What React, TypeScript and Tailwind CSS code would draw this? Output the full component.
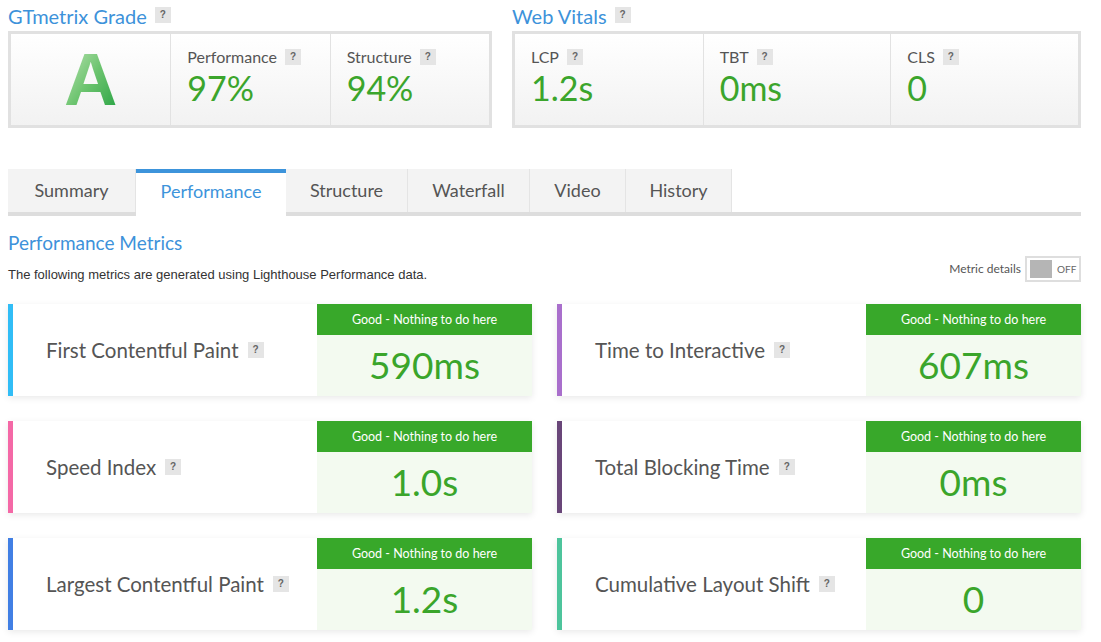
import { ReactNode } from "react";

interface HelpProp {
  className?: string;
}

const Help = ({ className = "" }: HelpProp) => {
  return (
    <span
      className={`inline-flex items-center justify-center w-[16px] h-[16px] bg-[#e5e5e5] text-[#666] text-[10px] font-bold font-['Liberation_Sans',sans-serif] leading-none ${className}`}
    >
      ?
    </span>
  );
};

const Title = ({ children }: { children: ReactNode }) => {
  return (
    <div className="h-[24px] flex items-start gap-2">
      <span className="text-[20px] leading-none text-[#3d92da] -mt-[1px]">{children}</span>
      <Help />
    </div>
  );
};

const Stat = ({ label, value }: { label: string; value: string }) => {
  return (
    <div className="border-l border-[#e2e2e2] pl-4 pt-[15px]">
      <div className="flex items-center gap-2 text-[16px] leading-none text-[#555]">
        {label}
        <Help />
      </div>
      <div className="mt-[6px] text-[34px] leading-none text-[#3ba52c]">{value}</div>
    </div>
  );
};

const tabs = ["Summary", "Performance", "Structure", "Waterfall", "Video", "History"];
const tabWidths = ["w-[128px]", "w-[150px]", "w-[122px]", "w-[122px]", "w-[96px]", "w-[106px]"];

interface MetricProp {
  label: string;
  value: string;
  bar: string;
}

const Metric = ({ label, value, bar }: MetricProp) => {
  return (
    <div
      className={`flex h-[92px] bg-white border-l-[5px] ${bar} shadow-[0_2px_7px_rgba(0,0,0,0.09)]`}
    >
      <div className="flex-1 flex items-center pl-[33px] gap-[9px]">
        <span className="text-[20.5px] text-[#555]">{label}</span>
        <Help />
      </div>
      <div className="w-[215px] flex flex-col">
        <div className="h-[31px] bg-[#38a82a] text-white text-[12.5px] flex items-center justify-center pt-[2px]">
          Good - Nothing to do here
        </div>
        <div className="flex-1 bg-[#f3faf0] flex items-center justify-center text-[37px] leading-none text-[#3aa52b] pb-[3px]">
          {value}
        </div>
      </div>
    </div>
  );
};

const metrics: MetricProp[] = [
  { label: "First Contentful Paint", value: "590ms", bar: "border-[#31bdf6]" },
  { label: "Time to Interactive", value: "607ms", bar: "border-[#a96fcc]" },
  { label: "Speed Index", value: "1.0s", bar: "border-[#f468a6]" },
  { label: "Total Blocking Time", value: "0ms", bar: "border-[#694679]" },
  { label: "Largest Contentful Paint", value: "1.2s", bar: "border-[#417fe4]" },
  { label: "Cumulative Layout Shift", value: "0", bar: "border-[#4dc49c]" },
];

export default function App() {
  return (
    <div className="w-[1101px] h-[642px] bg-white overflow-hidden font-['Lato',sans-serif]">
      <div className="ml-2 w-[1073px] pt-[7px]">
        <div className="flex gap-5">
          <div className="w-[484px]">
            <Title>GTmetrix Grade</Title>
            <div className="h-[97px] border-[3px] border-[#e1e1e1] bg-gradient-to-b from-white to-[#f2f2f2] grid grid-cols-3">
              <div className="flex items-center justify-center">
                <span className="text-[74px] leading-none font-bold font-['Liberation_Sans',sans-serif] bg-gradient-to-br from-[#c2e6bb] via-[#6cc46f] to-[#16a140] bg-clip-text text-transparent">
                  A
                </span>
              </div>
              <Stat label="Performance" value="97%" />
              <Stat label="Structure" value="94%" />
            </div>
          </div>
          <div className="flex-1">
            <Title>Web Vitals</Title>
            <div className="h-[97px] border-[3px] border-[#e1e1e1] bg-gradient-to-b from-white to-[#f2f2f2] grid grid-cols-3 [&>div:first-child]:border-l-0">
              <Stat label="LCP" value="1.2s" />
              <Stat label="TBT" value="0ms" />
              <Stat label="CLS" value="0" />
            </div>
          </div>
        </div>

        <div className="mt-[41px] flex border-b-4 border-[#dddddd] h-[47px] items-start">
          {tabs.map((t, i) =>
            t === "Performance" ? (
              <div
                key={t}
                className={`${tabWidths[i]} h-[47px] -mb-1 bg-white border-t-4 border-[#3d94db] flex items-center justify-center text-[18px] text-[#3d94db] pb-[7px]`}
              >
                {t}
              </div>
            ) : (
              <div
                key={t}
                className={`${tabWidths[i]} h-[43px] bg-[#f3f3f3] border-r border-[#e4e4e4] flex items-center justify-center text-[18px] text-[#555]`}
              >
                {t}
              </div>
            )
          )}
        </div>

        <div className="mt-[17px] text-[19px] leading-none text-[#3d92da]">Performance Metrics</div>
        <div className="flex items-end justify-between mt-[4px]">
          <div className="text-[13px] text-[#333] font-['Liberation_Sans',sans-serif] -mb-[2px]">
            The following metrics are generated using Lighthouse Performance data.
          </div>
          <div className="flex items-center gap-[4px]">
            <span className="text-[12px] text-[#555]">Metric details</span>
            <div className="w-[56px] h-[26px] border-2 border-[#dedede] flex items-center pl-[3px] gap-[5px]">
              <div className="w-[22px] h-[18px] bg-[#b5b5b5]" />
              <span className="text-[10px] text-[#666]">OFF</span>
            </div>
          </div>
        </div>

        <div className="mt-[22px] grid grid-cols-2 gap-[25px]">
          {metrics.map((m) => (
            <Metric key={m.label} {...m} />
          ))}
        </div>
      </div>
    </div>
  );
}
